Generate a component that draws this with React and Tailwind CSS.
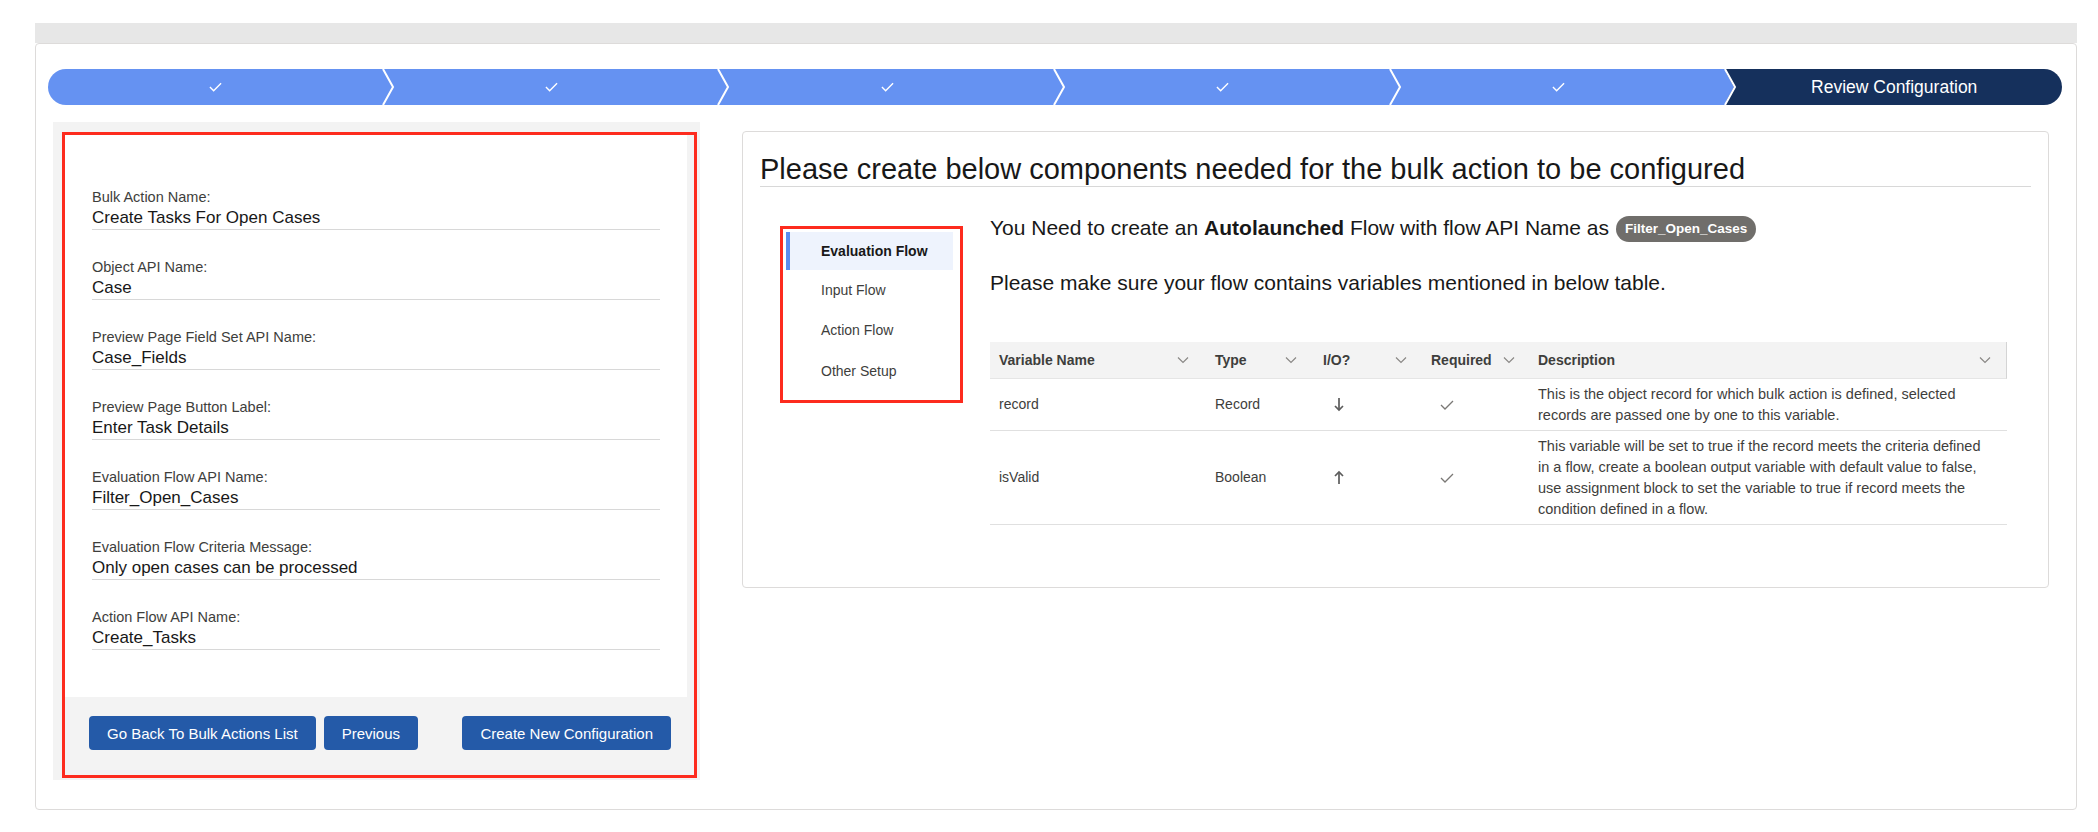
import React from "react";
import clsx from "clsx";

const fields = [
  { label: "Bulk Action Name:", value: "Create Tasks For Open Cases" },
  { label: "Object API Name:", value: "Case" },
  { label: "Preview Page Field Set API Name:", value: "Case_Fields" },
  { label: "Preview Page Button Label:", value: "Enter Task Details" },
  { label: "Evaluation Flow API Name:", value: "Filter_Open_Cases" },
  { label: "Evaluation Flow Criteria Message:", value: "Only open cases can be processed" },
  { label: "Action Flow API Name:", value: "Create_Tasks" },
];

const steps = [
  { done: true },
  { done: true },
  { done: true },
  { done: true },
  { done: true },
  { done: false, label: "Review Configuration" },
];

const tabs = ["Evaluation Flow", "Input Flow", "Action Flow", "Other Setup"];

const SortIcon = () => (
  <svg width="12" height="8" viewBox="0 0 12 8" className="shrink-0">
    <polyline points="1,1.5 6,6.5 11,1.5" fill="none" stroke="#8a8886" strokeWidth="1.2" />
  </svg>
);

const CheckIcon = ({ color = "#7a7875", w = 14, h = 10, sw = 1.3 }) => (
  <svg width={w} height={h} viewBox="0 0 14 10">
    <polyline points="1,5 5,9 13,1" fill="none" stroke={color} strokeWidth={sw} />
  </svg>
);

const ArrowIcon = ({ up }) => (
  <svg width="10" height="15" viewBox="0 0 10 15">
    {up ? (
      <>
        <line x1="5" y1="2" x2="5" y2="14" stroke="#5c5c5c" strokeWidth="1.7" />
        <polyline points="1,6 5,2 9,6" fill="none" stroke="#5c5c5c" strokeWidth="1.7" />
      </>
    ) : (
      <>
        <line x1="5" y1="1" x2="5" y2="13" stroke="#5c5c5c" strokeWidth="1.7" />
        <polyline points="1,9 5,13 9,9" fill="none" stroke="#5c5c5c" strokeWidth="1.7" />
      </>
    )}
  </svg>
);

const Button = ({ children }) => (
  <button className="h-[34px] px-[18px] rounded-[4px] bg-[#245aa8] text-white text-[15px] leading-none">
    {children}
  </button>
);

const App = () => {
  return (
    <div className="w-[2098px] h-[832px] bg-white pt-[23px] pl-[35px] font-['Liberation_Sans',Arial,sans-serif] text-[#181818]">
      <div className="w-[2042px]">
        <div className="h-[20px] bg-[#e7e7e7]" />
        <div className="h-[767px] border border-[#dddbda] rounded-[4px] bg-white pt-[25px]">
          {/* progress path */}
          <div className="flex h-[36px] ml-[12px] mr-[14px]">
            {steps.map((s, i) => (
              <div
                key={i}
                className={clsx(
                  "relative flex-1 flex items-center justify-center",
                  i === 0 && "rounded-l-full",
                  i === steps.length - 1 && "rounded-r-full",
                  s.done ? "bg-[#6592f2]" : "bg-[#15305c]"
                )}
              >
                {s.done ? (
                  <CheckIcon color="#ffffff" w={13} h={10} sw={1.5} />
                ) : (
                  <span className="text-white text-[17.5px]">{s.label}</span>
                )}
                {i < steps.length - 1 && (
                  <svg
                    className="absolute top-0 left-full -ml-[2px] z-10"
                    width="13"
                    height="36"
                    viewBox="0 0 13 36"
                  >
                    <polygon points="0,0 10,18 0,36" fill="#6592f2" />
                    <polyline points="1,0 11,18 1,36" fill="none" stroke="#ffffff" strokeWidth="2" />
                  </svg>
                )}
              </div>
            ))}
          </div>

          <div className="flex items-start mt-[17px] pl-[17px]">
            {/* left summary panel */}
            <div className="w-[647px] h-[658px] bg-[#f3f3f3] pt-[10px] pl-[9px]">
              <div className="w-[635px] h-[646px] border-[3px] border-[#fd2b1e] flex flex-col">
                <div className="w-[622px] h-[562px] bg-white pt-[53px] px-[27px]">
                  {fields.map((f) => (
                    <div key={f.label} className="mb-[28px]">
                      <div className="text-[14.5px] leading-[18px] text-[#3e3e3c]">{f.label}</div>
                      <div className="mt-[1px] text-[17px] leading-[22px] text-[#181818] border-b border-[#d8d8d8]">
                        {f.value}
                      </div>
                    </div>
                  ))}
                </div>
                <div className="flex justify-between pt-[19px] pl-[24px] pr-[23px]">
                  <div className="flex gap-[8px]">
                    <Button>Go Back To Bulk Actions List</Button>
                    <Button>Previous</Button>
                  </div>
                  <Button>Create New Configuration</Button>
                </div>
              </div>
            </div>

            {/* right instructions panel */}
            <div className="ml-[42px] mt-[9px] w-[1307px] h-[457px] border border-[#dddbda] rounded-[4px] px-[17px] pt-[20px]">
              <h1 className="text-[29px] leading-[34px] text-[#181818] border-b border-[#d8d8d8]">
                Please create below components needed for the bulk action to be configured
              </h1>
              <div className="flex items-start">
                <div className="ml-[20px] mt-[39px] w-[183px] h-[177px] border-[3px] border-[#fd2b1e] pl-[3px] pt-[3px]">
                  {tabs.map((t, i) => (
                    <div
                      key={t}
                      className={clsx(
                        "w-[167px] flex items-center text-[14px]",
                        i === 0
                          ? "h-[38px] bg-[#eef3fd] border-l-[4px] border-[#5b8def] pl-[31px] font-bold text-[#181818]"
                          : "h-[40.5px] pl-[35px] text-[#3e3e3c]"
                      )}
                    >
                      {t}
                    </div>
                  ))}
                </div>

                <div className="ml-[27px] mt-[26px]">
                  <p className="text-[21px] leading-[28px] text-[#181818] flex items-center">
                    <span>
                      You Need to create an <b>Autolaunched</b> Flow with flow API Name as
                    </span>
                    <span className="ml-[7px] mt-[3px] inline-flex items-center h-[26px] px-[9px] rounded-full bg-[#706e6b] text-white text-[13.5px] font-bold">
                      Filter_Open_Cases
                    </span>
                  </p>
                  <p className="mt-[27px] text-[21px] leading-[28px] text-[#181818]">
                    Please make sure your flow contains variables mentioned in below table.
                  </p>

                  <div className="mt-[45px] w-[1017px]">
                    <div className="grid grid-cols-[216px_108px_107px_108px_478px] h-[37px] bg-[#f3f3f3] border-b border-[#e5e5e5] border-r border-r-[#d4d4d4] text-[14px] font-bold text-[#3e3e3c]">
                      <div className="flex items-center justify-between pl-[9px] pr-[17px]">
                        <span>Variable Name</span>
                        <SortIcon />
                      </div>
                      <div className="flex items-center justify-between pl-[9px] pr-[17px]">
                        <span>Type</span>
                        <SortIcon />
                      </div>
                      <div className="flex items-center justify-between pl-[9px] pr-[14px]">
                        <span>I/O?</span>
                        <SortIcon />
                      </div>
                      <div className="flex items-center justify-between pl-[10px] pr-[14px]">
                        <span>Required</span>
                        <SortIcon />
                      </div>
                      <div className="flex items-center justify-between pl-[9px] pr-[16px]">
                        <span>Description</span>
                        <SortIcon />
                      </div>
                    </div>

                    <div className="grid grid-cols-[216px_108px_107px_108px_478px] border-b border-[#e0e0e0] text-[14px] text-[#3e3e3c]">
                      <div className="flex items-center pl-[9px]">record</div>
                      <div className="flex items-center pl-[9px]">Record</div>
                      <div className="flex items-center pl-[20px]">
                        <ArrowIcon />
                      </div>
                      <div className="flex items-center pl-[19px]">
                        <CheckIcon />
                      </div>
                      <div className="pl-[9px] pt-[5px] pb-[4px] text-[14.5px] leading-[21px] whitespace-nowrap">
                        This is the object record for which bulk action is defined, selected
                        <br />
                        records are passed one by one to this variable.
                      </div>
                    </div>

                    <div className="grid grid-cols-[216px_108px_107px_108px_478px] border-b border-[#e0e0e0] text-[14px] text-[#3e3e3c]">
                      <div className="flex items-center pl-[9px]">isValid</div>
                      <div className="flex items-center pl-[9px]">Boolean</div>
                      <div className="flex items-center pl-[20px]">
                        <ArrowIcon up />
                      </div>
                      <div className="flex items-center pl-[19px]">
                        <CheckIcon />
                      </div>
                      <div className="pl-[9px] pt-[5px] pb-[4px] text-[14.5px] leading-[21px] whitespace-nowrap">
                        This variable will be set to true if the record meets the criteria defined
                        <br />
                        in a flow, create a boolean output variable with default value to false,
                        <br />
                        use assignment block to set the variable to true if record meets the
                        <br />
                        condition defined in a flow.
                      </div>
                    </div>
                  </div>
                </div>
              </div>
            </div>
          </div>
        </div>
      </div>
    </div>
  );
};

export default App;
